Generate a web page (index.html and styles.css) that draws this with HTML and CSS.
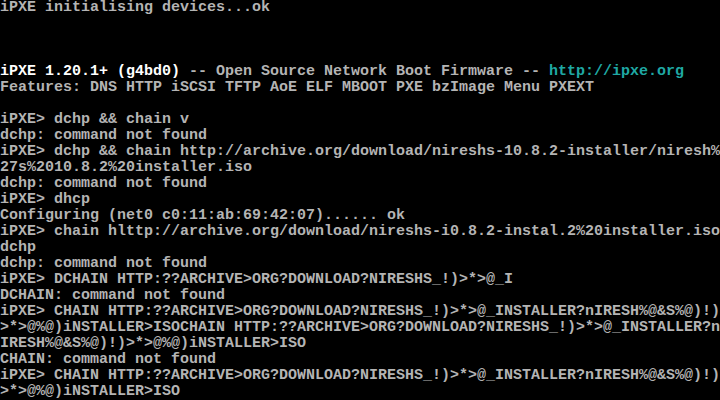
FILE: index.html
```html
<!DOCTYPE html>
<html lang="en">
<head>
<meta charset="utf-8">
<title>iPXE console</title>
<link rel="stylesheet" href="styles.css">
</head>
<body>
<pre class="console">iPXE initialising devices...ok



<span class="bright">iPXE 1.20.1+ (g4bd0)</span> -- Open Source Network Boot Firmware -- <span class="cyan">http://ipxe.org</span>
Features: DNS HTTP iSCSI TFTP AoE ELF MBOOT PXE bzImage Menu PXEXT

iPXE&gt; dchp &amp;&amp; chain v
dchp: command not found
iPXE&gt; dchp &amp;&amp; chain http://archive.org/download/nireshs-10.8.2-installer/niresh%
27s%2010.8.2%20installer.iso
dchp: command not found
iPXE&gt; dhcp
Configuring (net0 c0:11:ab:69:42:07)...... ok
iPXE&gt; chain hlttp://archive.org/download/nireshs-i0.8.2-instal.2%20installer.iso
dchp
dchp: command not found
iPXE&gt; DCHAIN HTTP:??ARCHIVE&gt;ORG?DOWNLOAD?NIRESHS_!)&gt;*&gt;@_I
DCHAIN: command not found
iPXE&gt; CHAIN HTTP:??ARCHIVE&gt;ORG?DOWNLOAD?NIRESHS_!)&gt;*&gt;@_INSTALLER?nIRESH%@&amp;S%@)!)
&gt;*&gt;@%@)iNSTALLER&gt;ISOCHAIN HTTP:??ARCHIVE&gt;ORG?DOWNLOAD?NIRESHS_!)&gt;*&gt;@_INSTALLER?n
IRESH%@&amp;S%@)!)&gt;*&gt;@%@)iNSTALLER&gt;ISO
CHAIN: command not found
iPXE&gt; CHAIN HTTP:??ARCHIVE&gt;ORG?DOWNLOAD?NIRESHS_!)&gt;*&gt;@_INSTALLER?nIRESH%@&amp;S%@)!)
&gt;*&gt;@%@)iNSTALLER&gt;ISO</pre>
</body>
</html>
```

FILE: styles.css
```css
html, body {
  margin: 0;
  padding: 0;
  background: #000;
  overflow: hidden;
}

.console {
  margin: 0;
  padding: 0;
  width: 720px;
  height: 400px;
  font-family: "Liberation Mono", "DejaVu Sans Mono", monospace;
  font-size: 15px;
  font-weight: bold;
  line-height: 16px;
  color: #b4b4b4;
  white-space: pre;
}

.bright {
  color: #ffffff;
}

.cyan {
  color: #1fa8a4;
}
```
